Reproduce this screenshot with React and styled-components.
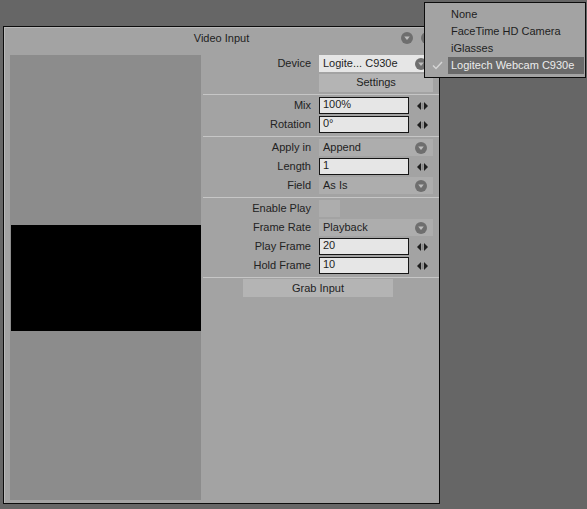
import React from 'react'
import styled, { createGlobalStyle } from 'styled-components'

const Global = createGlobalStyle`
  html, body {
    margin: 0;
    padding: 0;
    background: #666;
  }
  body {
    font-family: "Liberation Sans", Arial, sans-serif;
    font-size: 11px;
    color: #1e1e1e;
  }
`

const Screen = styled.div`
  position: relative;
  width: 587px;
  height: 509px;
  padding: 26px 0 0 3px;
  box-sizing: border-box;
  overflow: hidden;
`

const Window = styled.div`
  width: 437px;
  height: 478px;
  box-sizing: border-box;
  border: 1px solid #0c0c0c;
  background: #a3a3a3;
  box-shadow: inset 1px 1px 0 #b9b9b9;
  display: flex;
  flex-direction: column;
`

const TitleBar = styled.div`
  height: 22px;
  display: grid;
  grid-template-columns: 1fr auto 1fr;
  align-items: center;
`

const Title = styled.div`
  grid-column: 2;
  line-height: 22px;
`

const TitleIcons = styled.div`
  grid-column: 3;
  justify-self: end;
  display: flex;
  gap: 8px;
  padding-right: 6px;
`

const Body = styled.div`
  flex: 1;
  display: flex;
  padding: 5px 0 3px 6px;
  min-height: 0;
`

const Preview = styled.div`
  width: 191px;
  margin-top: 1px;
  background: #8c8c8c;
  display: flex;
  flex-direction: column;
  justify-content: center;
  padding-left: 1px;
  box-sizing: border-box;
`

const Frame = styled.div`
  height: 106px;
  background: #000;
`

const Controls = styled.div`
  flex: 1;
  margin-left: 2px;
  display: flex;
  flex-direction: column;
`

const Section = styled.div`
  padding: ${({ first }) => (first ? '0' : '1px')} 0 2px;
  border-bottom: 1px solid #c6c6c6;
`

const Row = styled.div`
  height: 19px;
  display: grid;
  grid-template-columns: 108px 1fr;
  column-gap: 8px;
  align-items: center;
`

const Label = styled.div`
  text-align: right;
  color: #222;
  padding-bottom: 2px;
`

const Cell = styled.div`
  grid-column: 2;
  display: flex;
  align-items: center;
`

const Field = styled.div`
  width: 90px;
  height: 17px;
  box-sizing: border-box;
  border: 1px solid #151515;
  background: #e6e6e6;
  padding-left: 3px;
  line-height: 13px;
`

const Stepper = styled.svg`
  margin-left: 8px;
`

const Select = styled.div`
  width: 114px;
  height: 17px;
  box-sizing: border-box;
  background: ${({ active }) => (active ? '#e6e6e6' : '#adadad')};
  padding: 0 6px 0 4px;
  display: flex;
  align-items: center;
  justify-content: space-between;
`

const SelectText = styled.span`
  padding-bottom: 2px;
`

const Check = styled.div`
  width: 21px;
  height: 17px;
  background: #adadad;
`

const Button = styled.div`
  width: ${({ w }) => w}px;
  height: 18px;
  margin-left: ${({ offset }) => offset || 0}px;
  background: #b4b4b4;
  text-align: center;
  line-height: ${({ lift }) => (lift ? 16 : 18)}px;
`

const ButtonRow = styled.div`
  height: 19px;
  display: flex;
  align-items: center;
`

const Menu = styled.div`
  position: absolute;
  left: 424px;
  top: 2px;
  width: 162px;
  height: 76px;
  box-sizing: border-box;
  border: 1px solid #0c0c0c;
  background: #a3a3a3;
  padding: 3px 1px 0 0;
`

const MenuItem = styled.div`
  height: 17px;
  display: flex;
  align-items: center;
`

const CheckSlot = styled.div`
  width: 23px;
  display: flex;
  justify-content: center;
  padding-left: 2px;
  box-sizing: border-box;
`

const MenuLabel = styled.div`
  flex: 1;
  height: 17px;
  line-height: 17px;
  padding-left: 3px;
  background: ${({ selected }) => (selected ? '#6a6a6a' : 'transparent')};
  color: ${({ selected }) => (selected ? '#ececec' : '#1e1e1e')};
`

const DropCircle = () => (
  <svg width="12" height="12" viewBox="0 0 12 12">
    <circle cx="6" cy="6" r="6" fill="#6e6e6e" />
    <polygon points="3.2,4.6 8.8,4.6 6,8" fill="#bdbdbd" />
  </svg>
)

const Arrows = () => (
  <Stepper width="11" height="8" viewBox="0 0 11 8">
    <polygon points="0,4 4,0 4,8" fill="#1e1e1e" />
    <polygon points="11,4 7,0 7,8" fill="#1e1e1e" />
    <rect x="4.6" y="1" width="1.8" height="6" fill="#8a8a8a" />
  </Stepper>
)

const InputRow = ({ label, value }) => (
  <Row>
    <Label>{label}</Label>
    <Cell>
      <Field>{value}</Field>
      <Arrows />
    </Cell>
  </Row>
)

const SelectRow = ({ label, value, active }) => (
  <Row>
    <Label>{label}</Label>
    <Cell>
      <Select active={active}>
        <SelectText>{value}</SelectText>
        <DropCircle />
      </Select>
    </Cell>
  </Row>
)

const DEVICES = ['None', 'FaceTime HD Camera', 'iGlasses', 'Logitech Webcam C930e']

export default function App() {
  return (
    <Screen>
      <Global />
      <Window>
        <TitleBar>
          <Title>Video Input</Title>
          <TitleIcons>
            <DropCircle />
            <DropCircle />
          </TitleIcons>
        </TitleBar>
        <Body>
          <Preview>
            <Frame />
          </Preview>
          <Controls>
            <Section first>
              <SelectRow label="Device" value="Logite... C930e" active />
              <Row>
                <Cell>
                  <Button w={114} lift>Settings</Button>
                </Cell>
              </Row>
            </Section>
            <Section>
              <InputRow label="Mix" value="100%" />
              <InputRow label="Rotation" value="0°" />
            </Section>
            <Section>
              <SelectRow label="Apply in" value="Append" />
              <InputRow label="Length" value="1" />
              <SelectRow label="Field" value="As Is" />
            </Section>
            <Section>
              <Row>
                <Label>Enable Play</Label>
                <Cell>
                  <Check />
                </Cell>
              </Row>
              <SelectRow label="Frame Rate" value="Playback" />
              <InputRow label="Play Frame" value="20" />
              <InputRow label="Hold Frame" value="10" />
            </Section>
            <ButtonRow>
              <Button w={150} offset={40}>Grab Input</Button>
            </ButtonRow>
          </Controls>
        </Body>
      </Window>
      <Menu>
        {DEVICES.map((d, i) => {
          const selected = i === DEVICES.length - 1
          return (
            <MenuItem key={d}>
              <CheckSlot>
                {selected && (
                  <svg width="11" height="9" viewBox="0 0 11 9">
                    <polyline points="1,4.5 4,7.5 10,1" fill="none" stroke="#d6d6d6" strokeWidth="1.4" />
                  </svg>
                )}
              </CheckSlot>
              <MenuLabel selected={selected}>{d}</MenuLabel>
            </MenuItem>
          )
        })}
      </Menu>
    </Screen>
  )
}
